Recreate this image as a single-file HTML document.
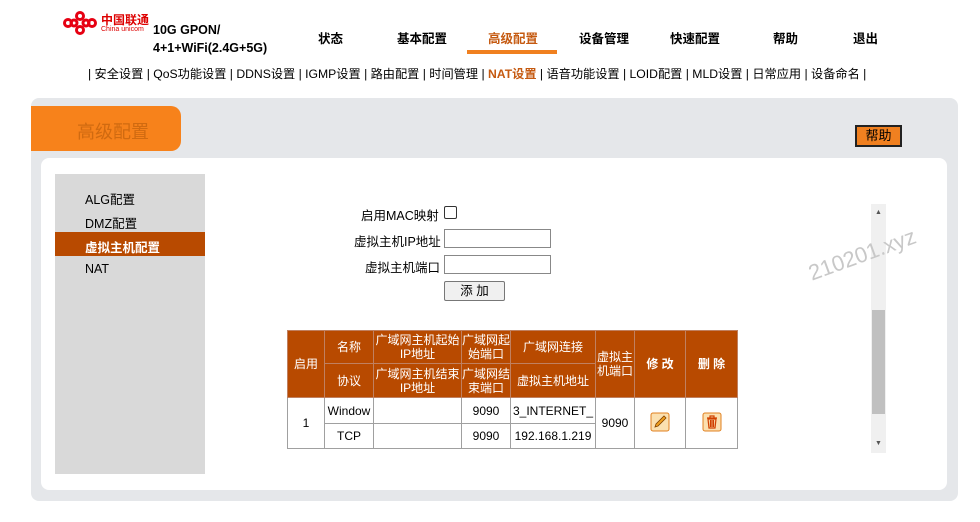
<!DOCTYPE html>
<html><head><meta charset="utf-8"><style>
*{margin:0;padding:0;box-sizing:border-box}
body{width:980px;height:522px;background:#fff;font-family:"Liberation Sans","Noto Sans CJK SC",sans-serif;font-size:12px;color:#000;position:relative;overflow:hidden}
.a{position:absolute}
.nav{font-size:12.5px;font-weight:bold;top:28px;white-space:nowrap}
.sub{top:64px;left:88px;font-size:12.2px;white-space:nowrap;color:#000}
.sub b{color:#c55a11}
table{border-collapse:collapse;position:absolute;left:287px;top:330px;width:450px;table-layout:fixed}
td{border:1px solid #a0a0a0;text-align:center;font-size:12px;line-height:14px;padding:0}
th{background:#b84a00;color:#fff;font-weight:normal;font-size:12px;border:1px solid #c08060;line-height:14px;padding:0}
</style></head><body>
<svg class="a" style="left:62px;top:11px" width="36" height="24" viewBox="0 0 36 24"><g fill="none" stroke="#e60012" stroke-width="3"><circle cx="6" cy="12" r="3.5"/><circle cx="30" cy="12" r="3.5"/><circle cx="18" cy="5" r="3.5"/><circle cx="18" cy="19" r="3.5"/><circle cx="12" cy="12" r="3"/><circle cx="24" cy="12" r="3"/></g></svg>
<div class="a" style="left:101px;top:11px;font-size:12px;color:#d00;font-weight:bold">中国联通</div>
<div class="a" style="left:101px;top:26px;font-size:7px;color:#d00">China unicom</div>
<div class="a" style="left:153px;top:21px;font-size:12.5px;font-weight:bold;line-height:18px">10G GPON/<br>4+1+WiFi(2.4G+5G)</div>
<div class="a nav" style="left:318px">状态</div>
<div class="a nav" style="left:397px">基本配置</div>
<div class="a nav" style="left:488px;color:#c55a11">高级配置</div>
<div class="a" style="left:467px;top:50px;width:90px;height:4px;background:#f08020"></div>
<div class="a nav" style="left:579px">设备管理</div>
<div class="a nav" style="left:670px">快速配置</div>
<div class="a nav" style="left:773px">帮助</div>
<div class="a nav" style="left:853px">退出</div>
<div class="a sub">| 安全设置 | QoS功能设置 | DDNS设置 | IGMP设置 | 路由配置 | 时间管理 | <b>NAT设置</b> | 语音功能设置 | LOID配置 | MLD设置 | 日常应用 | 设备命名 |</div>
<div class="a" style="left:31px;top:98px;width:927px;height:403px;background:#e5e7ea;border-radius:8px"></div>
<div class="a" style="left:31px;top:106px;width:150px;height:45px;background:#f7821b;border-radius:0 10px 10px 0"></div>
<div class="a" style="left:77px;top:118px;font-size:18px;color:#d06a10">高级配置</div>
<div class="a" style="left:855px;top:125px;width:47px;height:22px;background:#f08020;border:2px solid #222;text-align:center;font-size:13px;line-height:18px">帮助</div>
<div class="a" style="left:41px;top:158px;width:906px;height:332px;background:#fff;border-radius:8px"></div>
<div class="a" style="left:55px;top:174px;width:150px;height:300px;background:#d9d9d9"></div>
<div class="a" style="left:85px;top:189px;font-size:12.5px">ALG配置</div>
<div class="a" style="left:85px;top:213px;font-size:12.5px">DMZ配置</div>
<div class="a" style="left:55px;top:232px;width:150px;height:24px;background:#b84a00"></div>
<div class="a" style="left:85px;top:237px;font-size:12.5px;color:#fff;font-weight:bold">虚拟主机配置</div>
<div class="a" style="left:85px;top:262px;font-size:12.5px">NAT</div>
<div class="a" style="left:361px;top:205px;font-size:12.5px">启用MAC映射</div>
<div class="a" style="left:444px;top:206px;width:13px;height:13px;border:1px solid #333;border-radius:2px"></div>
<div class="a" style="left:354px;top:231px;font-size:12.5px">虚拟主机IP地址</div>
<div class="a" style="left:444px;top:229px;width:107px;height:19px;border:1px solid #888"></div>
<div class="a" style="left:365px;top:257px;font-size:12.5px">虚拟主机端口</div>
<div class="a" style="left:444px;top:255px;width:107px;height:19px;border:1px solid #888"></div>
<div class="a" style="left:444px;top:281px;width:61px;height:20px;border:1px solid #777;border-radius:2px;background:#f0f0f0;text-align:center;font-size:12.5px;line-height:18px">添 加</div>
<div class="a" style="left:871px;top:204px;width:15px;height:249px;background:#f0f0f0"></div>
<div class="a" style="left:872px;top:310px;width:13px;height:104px;background:#c0c0c0"></div>
<div class="a" style="left:875px;top:209px;font-size:7px;color:#555">▲</div>
<div class="a" style="left:875px;top:440px;font-size:7px;color:#555">▼</div>
<div class="a" style="left:805px;top:262px;font-size:22px;color:#c8c8c8;transform:rotate(-20deg);transform-origin:left top">210201.xyz</div>
<table>
<colgroup><col style="width:37px"><col style="width:49px"><col style="width:88px"><col style="width:49px"><col style="width:85px"><col style="width:39px"><col style="width:51px"><col style="width:52px"></colgroup>
<tr style="height:33px"><th rowspan="2">启用</th><th>名称</th><th>广域网主机起始IP地址</th><th>广域网起始端口</th><th>广域网连接</th><th rowspan="2">虚拟主机端口</th><th rowspan="2" style="font-weight:bold">修 改</th><th rowspan="2" style="font-weight:bold">删 除</th></tr>
<tr style="height:34px"><th>协议</th><th>广域网主机结束IP地址</th><th>广域网结束端口</th><th>虚拟主机地址</th></tr>
<tr style="height:26px"><td rowspan="2">1</td><td>Window</td><td></td><td>9090</td><td>3_INTERNET_</td><td rowspan="2">9090</td><td rowspan="2"><svg width="20" height="20" viewBox="0 0 20 20"><rect x="1" y="1" width="18" height="18" rx="2" fill="#fbe0b0" stroke="#e08020"/><path d="M5 15 L6 12 L14 4 L16 6 L8 14 Z" fill="#f0a020" stroke="#804000" stroke-width="0.8"/></svg></td><td rowspan="2"><svg width="20" height="20" viewBox="0 0 20 20"><rect x="1" y="1" width="18" height="18" rx="2" fill="#fbe0b0" stroke="#e08020"/><path d="M5 6 H15 M8 6 V4 H12 V6 M6 7 L7 16 H13 L14 7 Z M8.5 8 V15 M10 8 V15 M11.5 8 V15" fill="none" stroke="#d04000" stroke-width="1.2"/></svg></td></tr>
<tr style="height:25px"><td>TCP</td><td></td><td>9090</td><td>192.168.1.219</td></tr>
</table>
</body></html>
